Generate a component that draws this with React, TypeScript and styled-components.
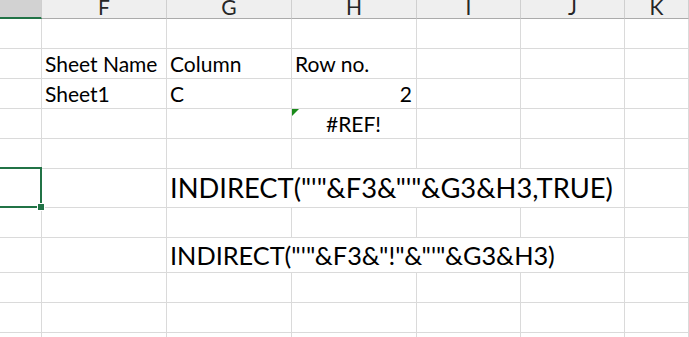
import styled, { createGlobalStyle, css } from 'styled-components';

const GlobalStyle = createGlobalStyle`
  body {
    margin: 0;
    background: #ffffff;
    overflow: hidden;
  }
`;

const EXCEL_GREEN = '#217346';
const GRID = '#dadada';
const COLUMN_WIDTHS = [42, 125, 125, 125, 104, 104];
const COLUMN_LETTERS = ['', 'F', 'G', 'H', 'I', 'J', 'K'];
const ROW_HEIGHTS = [30, 30, 30, 30, 30, 39, 30, 35, 30, 30, 30];

type Align = 'left' | 'right' | 'center';

interface CellData {
  col: number;
  text?: string;
  align?: Align;
  span?: number;
  size?: number;
  flagged?: boolean;
  selected?: boolean;
}

// rows are 1-based in the sheet, index 0 = row 1
const ROWS: CellData[][] = [
  [],
  [
    { col: 1, text: 'Sheet Name' },
    { col: 2, text: 'Column' },
    { col: 3, text: 'Row no.' },
  ],
  [
    { col: 1, text: 'Sheet1' },
    { col: 2, text: 'C' },
    { col: 3, text: '2', align: 'right' },
  ],
  [{ col: 3, text: '#REF!', align: 'center', flagged: true }],
  [],
  [
    { col: 0, selected: true },
    { col: 2, text: 'INDIRECT("\'"&F3&"\'"&G3&H3,TRUE)', span: 4, size: 27.3 },
  ],
  [],
  [{ col: 2, text: 'INDIRECT("\'"&F3&"!"&"\'"&G3&H3)', span: 4, size: 25.3 }],
  [],
  [],
  [],
];

const Sheet = styled.div`
  display: grid;
  grid-template-columns: ${COLUMN_WIDTHS.map((w) => `${w}px`).join(' ')} 1fr;
  grid-template-rows: 19px ${ROW_HEIGHTS.map((h) => `${h}px`).join(' ')};
  width: 100%;
  height: 337px;
  overflow: hidden;
  font-family: Lato, 'Liberation Sans', sans-serif;
  color: #000000;
`;

const HeaderCell = styled.div<{ $active?: boolean }>`
  box-sizing: border-box;
  display: flex;
  align-items: flex-end;
  justify-content: center;
  background: ${(p) => (p.$active ? '#d2d2d2' : '#efefef')};
  border-right: 1px solid #cfcfcf;
  border-bottom: ${(p) =>
    p.$active ? `2px solid ${EXCEL_GREEN}` : '1px solid #ababab'};
  font-size: 21px;
  line-height: 1;
  color: #262626;
  padding-bottom: 1px;
  overflow: hidden;
`;

const Cell = styled.div<{ $span: number; $align: Align; $size: number; $selected?: boolean }>`
  position: relative;
  box-sizing: border-box;
  grid-column: span ${(p) => p.$span};
  display: flex;
  align-items: flex-end;
  justify-content: ${(p) =>
    p.$align === 'right' ? 'flex-end' : p.$align === 'center' ? 'center' : 'flex-start'};
  padding: 0 4px 2px 3px;
  border-right: 1px solid ${GRID};
  border-bottom: 1px solid ${GRID};
  font-size: ${(p) => p.$size}px;
  line-height: 1.2;
  white-space: nowrap;

  ${(p) =>
    p.$selected &&
    css`
      &::after {
        content: '';
        position: absolute;
        top: -2px;
        right: -1px;
        bottom: -1px;
        left: -10px;
        border: 2px solid ${EXCEL_GREEN};
        z-index: 2;
      }
    `}
`;

const FillHandle = styled.span`
  position: absolute;
  right: -4px;
  bottom: -4px;
  width: 6px;
  height: 6px;
  background: ${EXCEL_GREEN};
  border: 1px solid #ffffff;
  z-index: 3;
`;

const ErrorFlag = styled.span`
  position: absolute;
  top: 0;
  left: 0;
  width: 0;
  height: 0;
  border-top: 7px solid #1a8a1a;
  border-right: 7px solid transparent;
`;

function SheetRow({ cells }: { cells: CellData[] }) {
  const out = [];
  let col = 0;
  while (col < COLUMN_LETTERS.length) {
    const data = cells.find((c) => c.col === col);
    const span = data?.span ?? 1;
    out.push(
      <Cell
        key={col}
        $span={span}
        $align={data?.align ?? 'left'}
        $size={data?.size ?? 21}
        $selected={data?.selected}
      >
        {data?.flagged && <ErrorFlag />}
        {data?.text}
        {data?.selected && <FillHandle />}
      </Cell>
    );
    col += span;
  }
  return <>{out}</>;
}

export default function App() {
  return (
    <>
      <GlobalStyle />
      <Sheet>
        {COLUMN_LETTERS.map((letter, i) => (
          <HeaderCell key={i} $active={i === 0}>
            {letter}
          </HeaderCell>
        ))}
        {ROWS.map((cells, r) => (
          <SheetRow key={r} cells={cells} />
        ))}
      </Sheet>
    </>
  );
}
